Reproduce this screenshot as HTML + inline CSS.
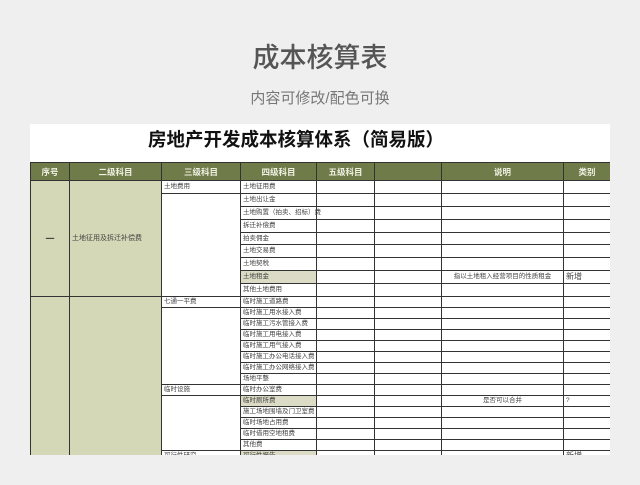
<!DOCTYPE html>
<html><head><meta charset="utf-8"><style>
body{margin:0;width:640px;height:485px;background:#efefef;font-family:"Liberation Sans","Noto Sans CJK SC",sans-serif;position:relative;overflow:hidden}
.t1{position:absolute;top:36px;left:0;width:640px;text-align:center;font-size:27px;color:#555;font-weight:500}
.t2{position:absolute;top:87px;left:0;width:640px;text-align:center;font-size:15px;color:#777}
.panel{position:absolute;left:30px;top:124px;width:580px;height:331px;background:#fff;overflow:hidden}
.h{position:absolute;top:2px;left:118px;width:290px;text-align:center;font-size:18.5px;font-weight:bold;color:#111;white-space:nowrap}
table{position:absolute;left:0;top:38px;border-collapse:collapse;table-layout:fixed;width:580px}
td{border:1px solid #333;font-size:6.5px;color:#444;padding:0 2px;white-space:nowrap;overflow:hidden;line-height:8px}
th{background:#6f7b48;color:#f0f1e4;font-size:8.5px;border:1px solid #333;height:17px;padding:0}
.g{background:#d4d8b6}
.y{background:#dcdcc6}
.c{text-align:center}
.s1 td{height:11.9px}
.s2 td{height:10px}
</style></head><body>
<div class="t1">成本核算表</div>
<div class="t2">内容可修改/配色可换</div>
<div class="panel">
<div class="h">房地产开发成本核算体系（简易版）</div>
<table>
<colgroup><col style="width:39px"><col style="width:92px"><col style="width:79px"><col style="width:76px"><col style="width:58px"><col style="width:67px"><col style="width:122px"><col style="width:47px"></colgroup>
<tr><th>序号</th><th>二级科目</th><th>三级科目</th><th>四级科目</th><th>五级科目</th><th></th><th>说明</th><th>类别</th></tr>
<tr class="s1"><td rowspan="9" class="g c" style="font-size:9px;font-weight:bold">一</td><td rowspan="9" class="g" style="font-size:7px">土地征用及拆迁补偿费</td><td>土地费用</td><td>土地征用费</td><td></td><td></td><td></td><td></td></tr>
<tr class="s1"><td rowspan="8"></td><td>土地出让金</td><td></td><td></td><td></td><td></td></tr>
<tr class="s1"><td style="overflow:visible">土地购置（拍卖、招标）费</td><td></td><td></td><td></td><td></td></tr>
<tr class="s1"><td>拆迁补偿费</td><td></td><td></td><td></td><td></td></tr>
<tr class="s1"><td>拍卖佣金</td><td></td><td></td><td></td><td></td></tr>
<tr class="s1"><td>土地交易费</td><td></td><td></td><td></td><td></td></tr>
<tr class="s1"><td>土地契税</td><td></td><td></td><td></td><td></td></tr>
<tr class="s1"><td class="y">土地租金</td><td></td><td></td><td class="c">指以土地租入经营项目的性质租金</td><td style="font-size:8px">新增</td></tr>
<tr class="s1"><td>其他土地费用</td><td></td><td></td><td></td><td></td></tr>
<tr class="s2"><td rowspan="16" class="g"></td><td rowspan="16" class="g"></td><td>七通一平费</td><td>临时施工道路费</td><td></td><td></td><td></td><td></td></tr>
<tr class="s2"><td rowspan="7"></td><td>临时施工用水接入费</td><td></td><td></td><td></td><td></td></tr>
<tr class="s2"><td>临时施工污水管接入费</td><td></td><td></td><td></td><td></td></tr>
<tr class="s2"><td>临时施工用电接入费</td><td></td><td></td><td></td><td></td></tr>
<tr class="s2"><td>临时施工用气接入费</td><td></td><td></td><td></td><td></td></tr>
<tr class="s2"><td>临时施工办公电话接入费</td><td></td><td></td><td></td><td></td></tr>
<tr class="s2"><td>临时施工办公网络接入费</td><td></td><td></td><td></td><td></td></tr>
<tr class="s2"><td>场地平整</td><td></td><td></td><td></td><td></td></tr>
<tr class="s2"><td>临时设施</td><td>临时办公室费</td><td></td><td></td><td></td><td></td></tr>
<tr class="s2"><td rowspan="5"></td><td class="y">临时厕所费</td><td></td><td></td><td class="c">是否可以合并</td><td>?</td></tr>
<tr class="s2"><td>施工场地围墙及门卫室费</td><td></td><td></td><td></td><td></td></tr>
<tr class="s2"><td>临时场地占用费</td><td></td><td></td><td></td><td></td></tr>
<tr class="s2"><td>临时借用空地租费</td><td></td><td></td><td></td><td></td></tr>
<tr class="s2"><td>其他费</td><td></td><td></td><td></td><td></td></tr>
<tr class="s2"><td>可行性研究</td><td class="y">可行性报告</td><td></td><td></td><td></td><td style="font-size:8px">新增</td></tr>
<tr class="s2"><td></td><td></td><td></td><td></td><td></td><td></td></tr>
</table>
</div>
</body></html>
